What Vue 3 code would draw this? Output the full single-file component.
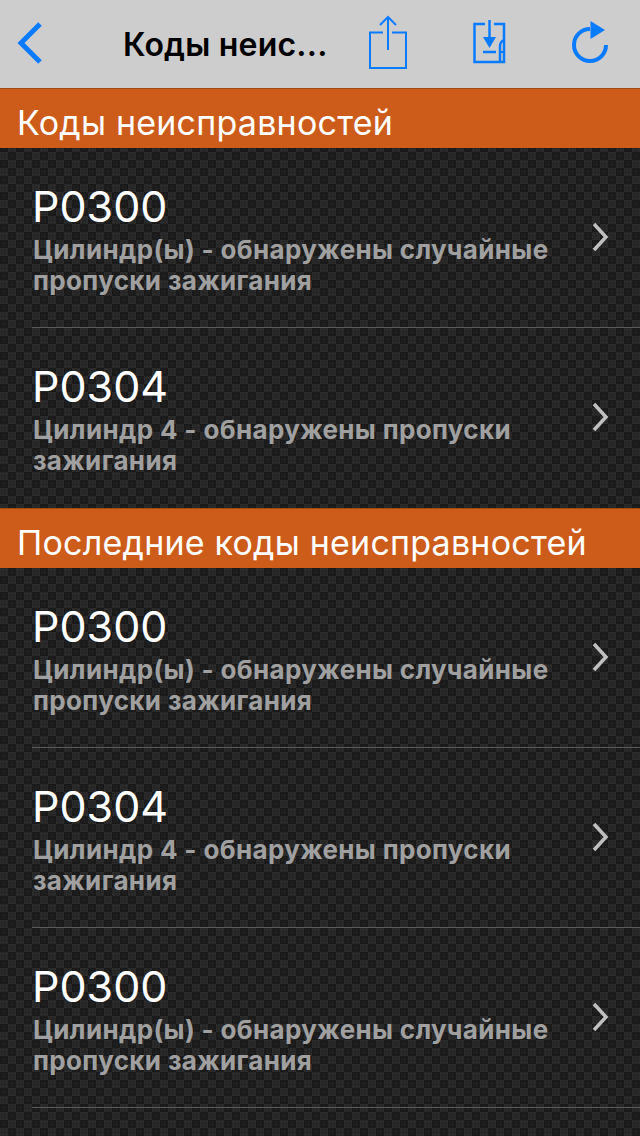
<template>
  <div class="screen">
    <!-- top bar -->
    <header class="nav-bar">
      <button class="nav-back" aria-label="Назад">
        <svg width="30" height="44" viewBox="0 0 30 44">
          <path d="M25 2 L6 21 L25 40" fill="none" stroke="#0a7bff" stroke-width="5" />
        </svg>
      </button>
      <div class="nav-title">Коды неис...</div>
      <div class="nav-actions">
        <svg width="40" height="54" viewBox="0 -1 40 54">
          <path d="M15 16.5 H2 V52 H38 V16.5 H24" fill="none" stroke="#0a7bff" stroke-width="2" />
          <path d="M20 1 V34 M12 9 L20 1 L28 9" fill="none" stroke="#0a7bff" stroke-width="2" />
        </svg>
        <svg width="33" height="44" viewBox="0 0 33 44">
          <path d="M12 4 H1.5 V42 H31 V4 H21" fill="none" stroke="#0a7bff" stroke-width="2.5" />
          <path d="M16.5 0 V18" stroke="#0a7bff" stroke-width="2.5" />
          <path d="M10 17 H23 L16.5 28 Z" fill="#0a7bff" />
          <path d="M10 32 H23" stroke="#0a7bff" stroke-width="2.5" />
          <path d="M27 43 V26 Q27 22 31 20" fill="none" stroke="#0a7bff" stroke-width="2.5" />
          <path d="M27 32 H31" stroke="#0a7bff" stroke-width="2" />
        </svg>
        <svg width="38" height="44" viewBox="0 0 38 44">
          <path d="M35 25 A16 16 0 1 1 19 9" fill="none" stroke="#0a7bff" stroke-width="4" />
          <path d="M19.5 1 L34 10 L19.5 19 Z" fill="#0a7bff" />
        </svg>
      </div>
    </header>

    <section v-for="section in sections" :key="section.title">
      <h2 class="section-title">{{ section.title }}</h2>
      <div v-for="(item, i) in section.items" :key="i" class="code-row">
        <div class="code-text">
          <div class="code-name">{{ item.code }}</div>
          <div class="code-desc">{{ item.desc }}</div>
        </div>
        <svg class="chevron" width="20" height="30" viewBox="0 0 20 30">
          <path d="M3 2 L15 15 L3 28" fill="none" stroke="#c0c0c0" stroke-width="3.5" />
        </svg>
      </div>
    </section>
  </div>
</template>

<script setup>
const random = {
  code: 'P0300',
  desc: 'Цилиндр(ы) - обнаружены случайные пропуски зажигания',
}
const cyl4 = {
  code: 'P0304',
  desc: 'Цилиндр 4 - обнаружены пропуски зажигания',
}

const sections = [
  { title: 'Коды неисправностей', items: [random, cyl4] },
  { title: 'Последние коды неисправностей', items: [random, cyl4, random] },
]
</script>

<style scoped>
.screen {
  width: 640px;
  height: 1136px;
  overflow: hidden;
  font-family: Inter, 'Liberation Sans', sans-serif;
  background-color: #181818;
  background-image:
    radial-gradient(circle, rgba(0, 0, 0, 0.25) 0.6px, transparent 1px),
    radial-gradient(closest-side, rgba(255, 255, 255, 0.06), rgba(255, 255, 255, 0) 100%),
    radial-gradient(closest-side, rgba(255, 255, 255, 0.06), rgba(255, 255, 255, 0) 100%),
    repeating-conic-gradient(#252525 0 25%, #131313 0 50%);
  background-size: 3px 3px, 16px 16px, 16px 16px, 16px 16px;
  background-position: 0 0, 4px 4px, 12px 12px, 0 0;
}

.nav-bar {
  height: 88px;
  background: #cdcdcd;
  display: flex;
  align-items: center;
  box-sizing: border-box;
  padding: 0 31px 0 15px;
}

.nav-back {
  width: 30px;
  height: 44px;
  padding: 0;
  border: 0;
  background: none;
  display: flex;
}

.nav-title {
  margin-left: 78px;
  font-size: 32px;
  font-weight: 600;
  letter-spacing: 0.2px;
  color: #000;
  white-space: nowrap;
}

.nav-actions {
  margin-left: auto;
  margin-top: -5px;
  display: flex;
  align-items: center;
  gap: 65px;
}

.section-title {
  margin: 0;
  height: 60px;
  box-sizing: border-box;
  padding: 14px 0 0 17px;
  border-top: 1px solid #a04a15;
  background: #cd5c1b;
  color: #fff;
  font-size: 34px;
  line-height: 40px;
  font-weight: 400;
  letter-spacing: 0.22px;
}

.code-row {
  position: relative;
  height: 180px;
  box-sizing: border-box;
  padding: 35px 90px 0 33px;
  display: flex;
}

.code-row::after {
  content: '';
  position: absolute;
  left: 32px;
  right: 0;
  bottom: 0;
  height: 1px;
  background: #5a5a5a;
}

section:first-of-type .code-row:last-child::after {
  display: none;
}

.code-name {
  margin-left: -1px;
  color: #fff;
  font-size: 43px;
  line-height: 46px;
}

.code-desc {
  margin-top: 5px;
  color: #a0a0a0;
  font-size: 26px;
  line-height: 31px;
  font-weight: 700;
  letter-spacing: 0.35px;
}

.chevron {
  position: absolute;
  right: 29px;
  top: 74px;
}
</style>
